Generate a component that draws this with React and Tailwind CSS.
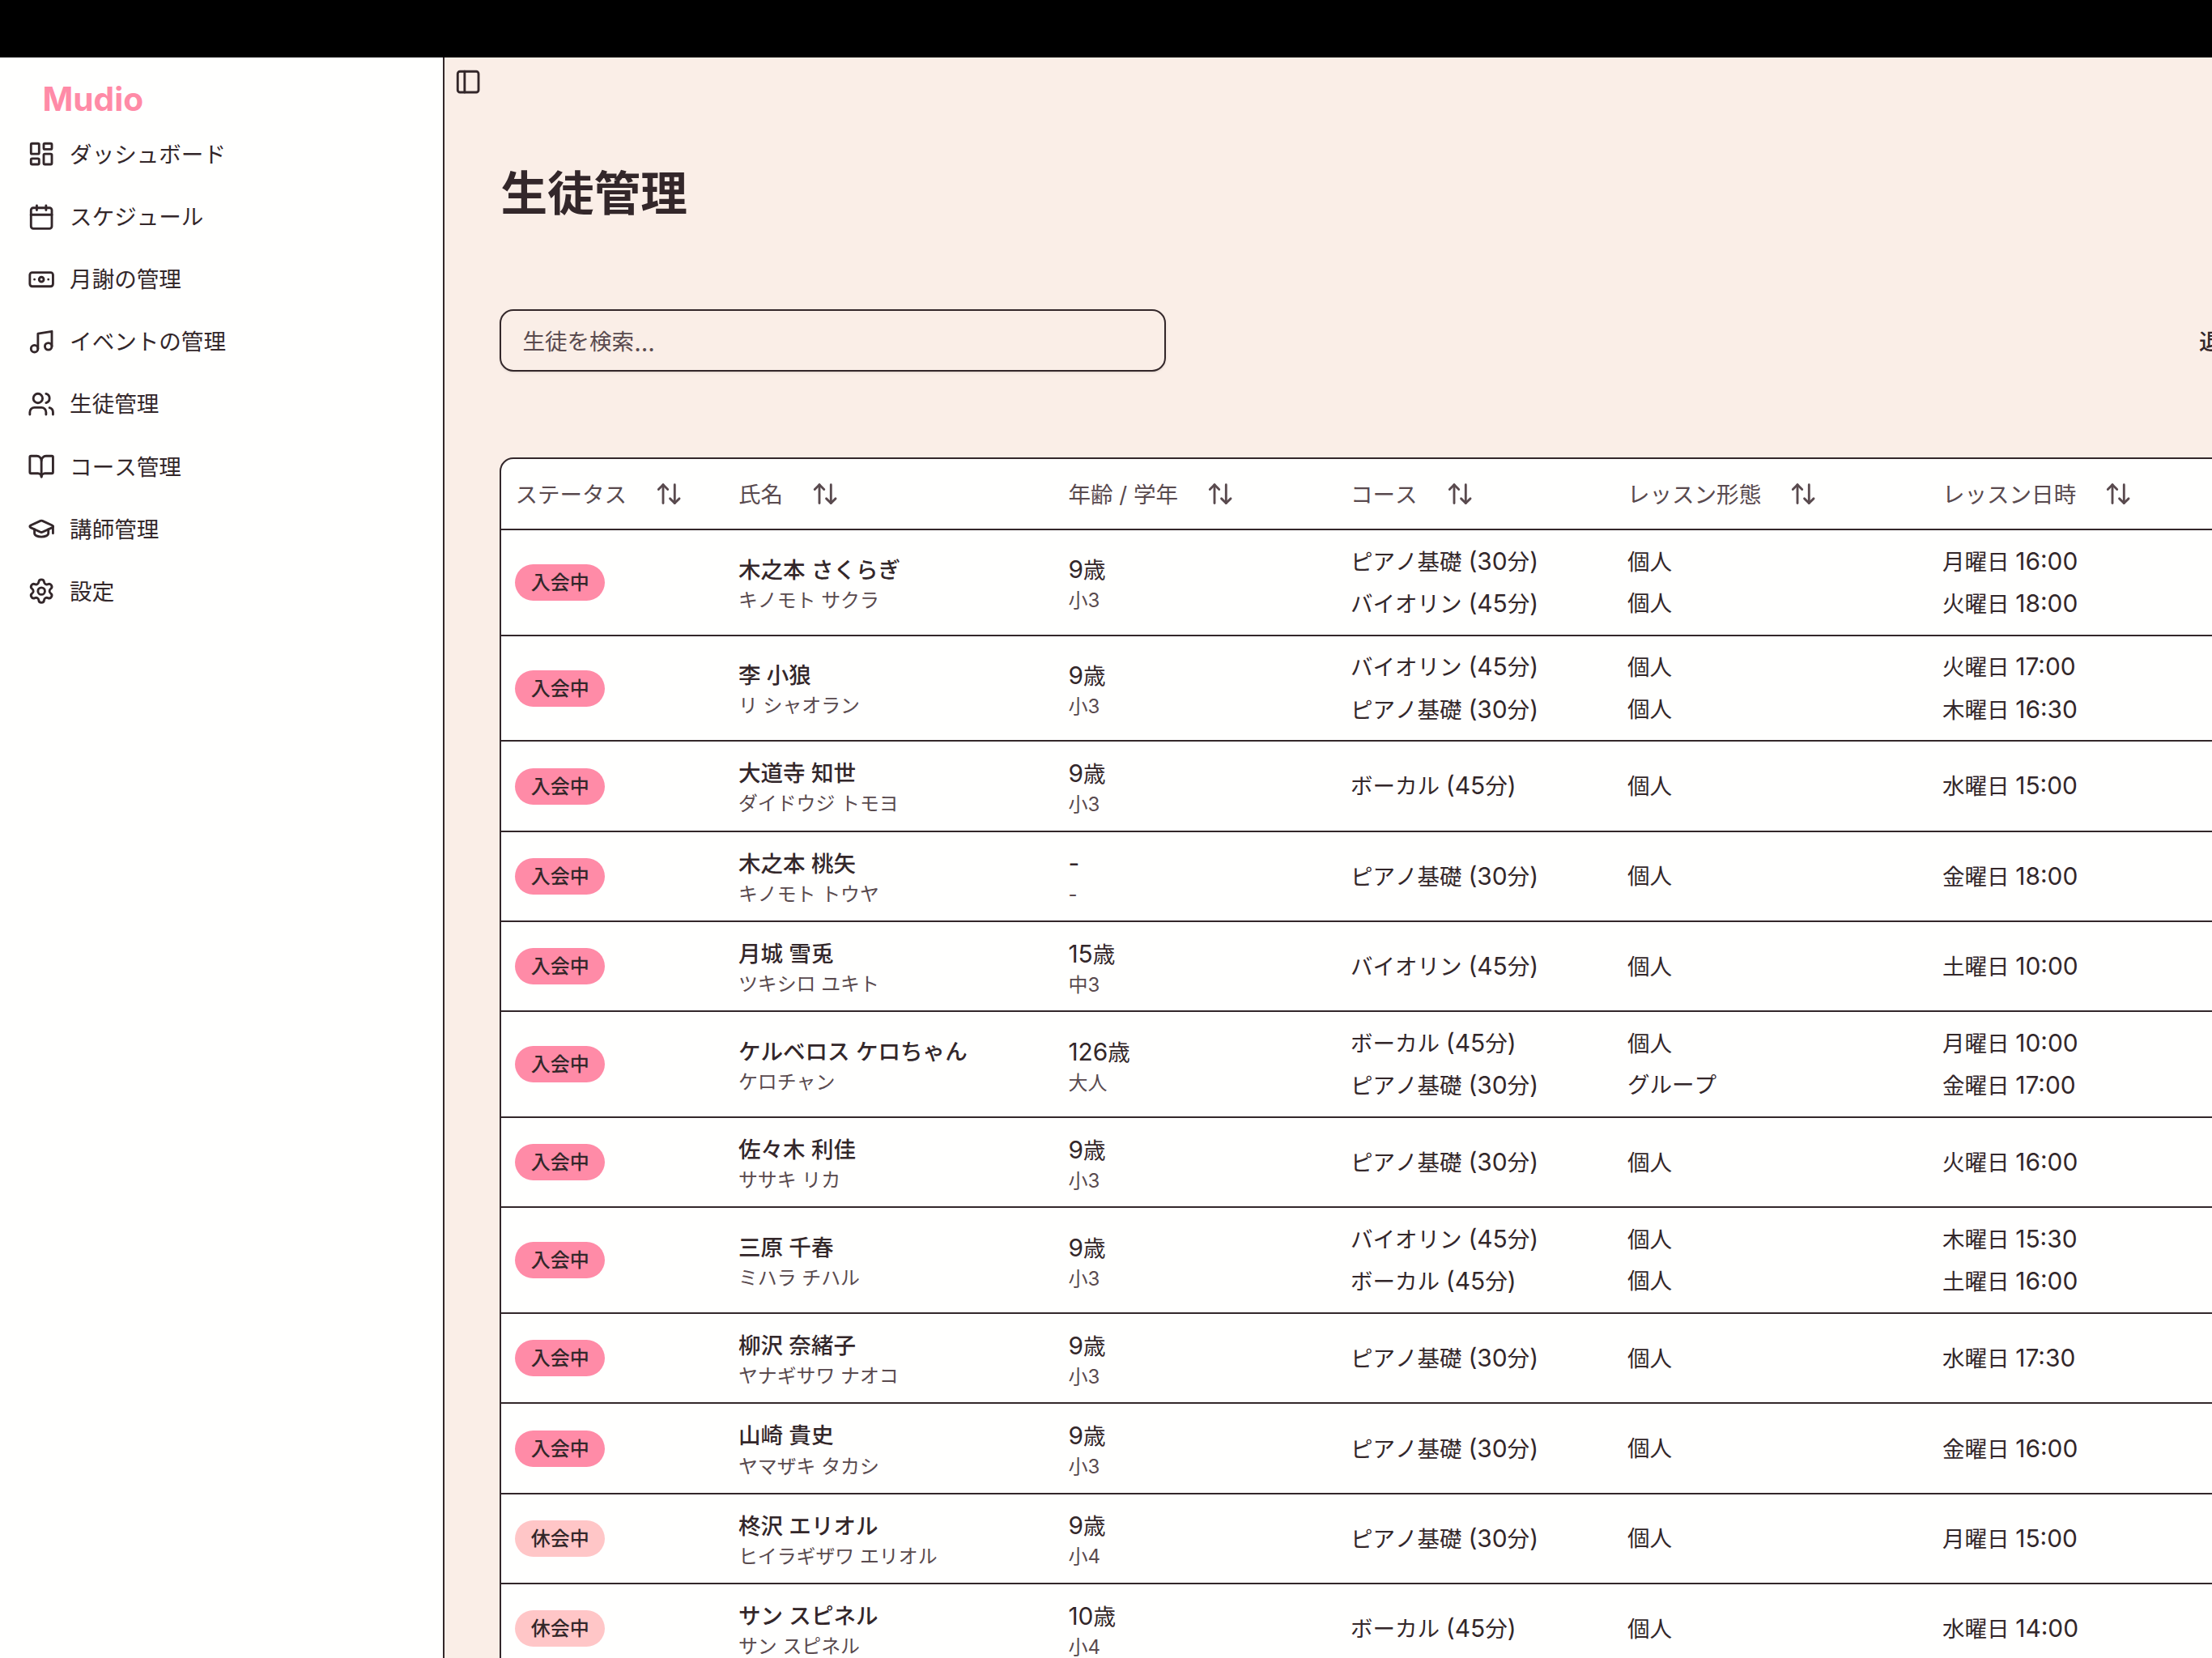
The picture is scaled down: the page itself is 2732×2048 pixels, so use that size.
import React from 'react';
import {
    LayoutDashboard,
    Calendar,
    Banknote,
    Music,
    Users,
    BookOpen,
    GraduationCap,
    Settings,
    PanelLeft,
    ArrowUpDown
} from 'lucide-react';

const navItems = [
    { name: 'ダッシュボード', icon: LayoutDashboard },
    { name: 'スケジュール',   icon: Calendar },
    { name: '月謝の管理',     icon: Banknote },
    { name: 'イベントの管理', icon: Music },
    { name: '生徒管理',       icon: Users },
    { name: 'コース管理',     icon: BookOpen },
    { name: '講師管理',       icon: GraduationCap },
    { name: '設定',           icon: Settings },
];

const columns = ['ステータス', '氏名', '年齢 / 学年', 'コース', 'レッスン形態', 'レッスン日時'];

const PIANO = 'ピアノ基礎 (30分)';
const VIOLIN = 'バイオリン (45分)';
const VOCAL = 'ボーカル (45分)';

const students = [
    { status: '入会中', name: '木之本 さくらぎ', kana: 'キノモト サクラ', age: '9歳', grade: '小3', lessons: [[PIANO, '個人', '月曜日 16:00'], [VIOLIN, '個人', '火曜日 18:00']] },
    { status: '入会中', name: '李 小狼', kana: 'リ シャオラン', age: '9歳', grade: '小3', lessons: [[VIOLIN, '個人', '火曜日 17:00'], [PIANO, '個人', '木曜日 16:30']] },
    { status: '入会中', name: '大道寺 知世', kana: 'ダイドウジ トモヨ', age: '9歳', grade: '小3', lessons: [[VOCAL, '個人', '水曜日 15:00']] },
    { status: '入会中', name: '木之本 桃矢', kana: 'キノモト トウヤ', age: '-', grade: '-', lessons: [[PIANO, '個人', '金曜日 18:00']] },
    { status: '入会中', name: '月城 雪兎', kana: 'ツキシロ ユキト', age: '15歳', grade: '中3', lessons: [[VIOLIN, '個人', '土曜日 10:00']] },
    { status: '入会中', name: 'ケルベロス ケロちゃん', kana: 'ケロチャン', age: '126歳', grade: '大人', lessons: [[VOCAL, '個人', '月曜日 10:00'], [PIANO, 'グループ', '金曜日 17:00']] },
    { status: '入会中', name: '佐々木 利佳', kana: 'ササキ リカ', age: '9歳', grade: '小3', lessons: [[PIANO, '個人', '火曜日 16:00']] },
    { status: '入会中', name: '三原 千春', kana: 'ミハラ チハル', age: '9歳', grade: '小3', lessons: [[VIOLIN, '個人', '木曜日 15:30'], [VOCAL, '個人', '土曜日 16:00']] },
    { status: '入会中', name: '柳沢 奈緒子', kana: 'ヤナギサワ ナオコ', age: '9歳', grade: '小3', lessons: [[PIANO, '個人', '水曜日 17:30']] },
    { status: '入会中', name: '山崎 貴史', kana: 'ヤマザキ タカシ', age: '9歳', grade: '小3', lessons: [[PIANO, '個人', '金曜日 16:00']] },
    { status: '休会中', name: '柊沢 エリオル', kana: 'ヒイラギザワ エリオル', age: '9歳', grade: '小4', lessons: [[PIANO, '個人', '月曜日 15:00']] },
    { status: '休会中', name: 'サン スピネル', kana: 'サン スピネル', age: '10歳', grade: '小4', lessons: [[VOCAL, '個人', '水曜日 14:00']] },
];

const rowGrid = 'grid grid-cols-[275.5px_407.5px_348.5px_342px_389px_1fr] items-center border-[#33272a]';

// Digits and punctuation are set a little larger than the kanji around them
const MixedText = ({ text }) =>
    text.split(/([0-9:()-]+)/).map((part, i) =>
        i % 2 ? <span key={i} className="text-[29.9px] [font-kerning:normal]">{part}</span> : part
    );

const LessonCell = ({ lessons, index }) => (
    <div className="flex flex-col gap-[10.3px] px-[17px] pt-px">
        {lessons.map((lesson, i) => (
            <span key={i} className="leading-[41.1px]"><MixedText text={lesson[index]} /></span>
        ))}
    </div>
);

const StudentRow = ({ student }) => (
    <div className={`${rowGrid} border-b-2 ${student.lessons.length > 1 ? 'h-[130.7px]' : 'h-[111.35px]'}`}>
        <div className="px-[17px]">
            <span className={`flex h-[45px] w-[110.5px] items-center justify-center rounded-full pt-px text-[24px] font-medium ${student.status === '入会中' ? 'bg-[#ff8ba7]' : 'bg-[#ffc6c7]'}`}>
                {student.status}
            </span>
        </div>
        <div className="flex flex-col px-[17px] pt-[4px]">
            <span className="font-medium leading-[41.1px]">{student.name}</span>
            <span className="text-[23.9px] leading-[34.3px] text-[#594a4e]">{student.kana}</span>
        </div>
        <div className="flex flex-col px-[17px] pt-[4px]">
            <span className="leading-[41.1px]"><MixedText text={student.age} /></span>
            <span className="text-[24px] leading-[34.3px] text-[#594a4e]">{student.grade}</span>
        </div>
        <LessonCell lessons={student.lessons} index={0} />
        <LessonCell lessons={student.lessons} index={1} />
        <LessonCell lessons={student.lessons} index={2} />
    </div>
);

export default function App() {
    return (
        <div className="flex h-[2048px] w-[2732px] flex-col overflow-hidden bg-black font-['Inter','Noto_Sans_CJK_JP',sans-serif] text-[27.55px] whitespace-nowrap text-[#33272a] [font-kerning:none]">
            <div className="h-[70.6px] shrink-0" />
            <div className="flex min-h-0 flex-1 bg-[#faeee7]">

                {/* --- SIDEBAR --- */}
                <aside className="w-[549px] shrink-0 border-r-2 border-[#33272a] bg-[#fffffe]">
                    <div className="flex h-[81.4px] items-center pt-[24px] pl-[52.5px] text-[40.6px] font-bold leading-none text-[#ff8ba7] [font-kerning:normal]">Mudio</div>
                    <nav>
                        {navItems.map(({ name, icon: Icon }) => (
                            <a key={name} className="flex h-[77.15px] items-center gap-[17.5px] pl-[34.3px]">
                                <Icon size={34.3} />
                                <span className="pt-[2px]">{name}</span>
                            </a>
                        ))}
                    </nav>
                </aside>

                {/* --- MAIN --- */}
                <main className="min-w-0 flex-1 overflow-hidden">
                    <div className="flex h-[60.4px] items-center pl-[12px]">
                        <PanelLeft size={34.3} />
                    </div>
                    <div className="w-[2900px] pl-[68.4px]">
                        <h1 className="pt-[67px] pl-px text-[57.6px] font-bold leading-[82px]">生徒管理</h1>
                        <div className="mt-[102.5px] flex h-[77px] items-center">
                            <div className="flex h-full w-[823px] items-center rounded-[17px] border-2 border-[#33272a] pt-[4px] pl-[26px] text-[#594a4e] shadow-sm">
                                生徒を検索<span className="text-[29.9px]">...</span>
                            </div>
                            <span className="ml-[1275.5px] pt-[4px] font-medium">退会者を表示</span>
                        </div>

                        {/* --- STUDENT TABLE --- */}
                        <div className="mt-[106px] overflow-hidden rounded-[17px] border-2 border-[#33272a] bg-[#fffffe]">
                            <div className={`${rowGrid} h-[87.5px] border-b-2 text-[#594a4e]`}>
                                {columns.map((label) => (
                                    <div key={label} className="flex items-center gap-[35px] px-[17px]">
                                        <span className="pt-[2px]">{label}</span>
                                        <ArrowUpDown size={34.3} />
                                    </div>
                                ))}
                            </div>
                            {students.map((student) => (
                                <StudentRow key={student.name} student={student} />
                            ))}
                        </div>
                    </div>
                </main>
            </div>
        </div>
    );
}
